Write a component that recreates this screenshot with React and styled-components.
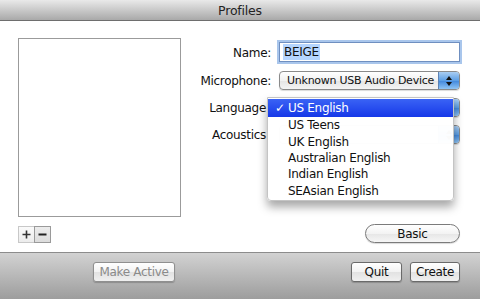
import React from 'react';
import styled, { createGlobalStyle } from 'styled-components';

const GlobalStyle = createGlobalStyle`
  html, body {
    margin: 0;
    padding: 0;
    background: #fff;
  }
  body {
    font-family: 'DejaVu Sans', 'Liberation Sans', sans-serif;
    font-size: 12px;
    color: #111;
  }
`;

const Window = styled.div`
  width: 480px;
  height: 299px;
  display: flex;
  flex-direction: column;
  overflow: hidden;
`;

const TitleBar = styled.div`
  height: 21px;
  flex-shrink: 0;
  display: flex;
  align-items: center;
  justify-content: center;
  background: linear-gradient(#e9e9e9, #c9c9c9 50%, #a9a9a9);
  border-bottom: 1px solid #6e6e6e;
  box-sizing: border-box;
  font-size: 12.5px;
  color: #222;
  letter-spacing: -0.2px;
`;

const Content = styled.div`
  flex: 1;
  display: flex;
  padding: 17px 20px 9px 18px;
  background: #fff;
`;

const LeftColumn = styled.div`
  width: 163px;
  display: flex;
  flex-direction: column;
  justify-content: space-between;
`;

const ListBox = styled.div`
  height: 179px;
  box-sizing: border-box;
  border: 1px solid #9b9b9b;
  background: #fff;
`;

const SegmentRow = styled.div`
  display: flex;
`;

const Segment = styled.div`
  width: 17px;
  height: 17px;
  box-sizing: border-box;
  display: flex;
  align-items: center;
  justify-content: center;
  border: 1px solid ${p => (p.$pressed ? '#9a9a9a' : '#c8c8c8')};
  background: ${p => (p.$pressed ? 'linear-gradient(#ececec, #dcdcdc)' : 'linear-gradient(#fafafa, #ececec)')};
  & + & {
    margin-left: -1px;
  }
`;

const RightColumn = styled.div`
  flex: 1;
  display: flex;
  flex-direction: column;
  justify-content: space-between;
  align-items: flex-end;
  padding-top: 4px;
`;

const Form = styled.div`
  position: relative;
  display: grid;
  grid-template-columns: 90px 181px;
  column-gap: 8px;
  row-gap: 8px;
  align-items: center;
`;

const Label = styled.div`
  text-align: right;
  letter-spacing: -0.3px;
  white-space: nowrap;
  padding-right: ${p => p.$pad || 0}px;
`;

const TextField = styled.div`
  height: 20px;
  box-sizing: border-box;
  border: 1px solid #6f8fc0;
  box-shadow: 0 0 0 2px #a9c6ec;
  background: #fff;
  display: flex;
  align-items: center;
  padding-left: 3px;
  margin-bottom: 1px;
`;

const Selected = styled.span`
  background: #b5d5ff;
  padding: 1px 1px;
  letter-spacing: -0.3px;
`;

const Popup = styled.div`
  height: 19px;
  box-sizing: border-box;
  border: 1px solid #8a8a8a;
  border-radius: 4px;
  background: linear-gradient(#ffffff, #f1f1f1 50%, #e4e4e4 51%, #f4f4f4);
  display: flex;
  align-items: center;
  overflow: hidden;
  box-shadow: 0 1px 1px rgba(0, 0, 0, 0.15);
`;

const PopupText = styled.div`
  flex: 1;
  min-width: 0;
  padding-left: 7px;
  font-size: 11px;
  letter-spacing: -0.25px;
  white-space: nowrap;
`;

const PopupArrows = styled.div`
  width: 20px;
  flex-shrink: 0;
  height: 100%;
  display: flex;
  align-items: center;
  justify-content: center;
  background: linear-gradient(#a9cdf2, #5d9fe4 50%, #3f86dc 51%, #8fc4f4);
  border-left: 1px solid #5c82b5;
`;

const Menu = styled.div`
  position: absolute;
  left: 86px;
  top: 55px;
  width: 187px;
  height: 104px;
  box-sizing: border-box;
  padding-top: 1px;
  background: rgba(255, 255, 255, 0.98);
  border: 1px solid #c4c4c4;
  border-radius: 0 0 4px 4px;
  box-shadow: 0 6px 10px rgba(0, 0, 0, 0.35);
`;

const MenuItem = styled.div`
  display: flex;
  align-items: center;
  padding-left: 20px;
  position: relative;
  letter-spacing: -0.3px;
  background: ${p => (p.$active ? 'linear-gradient(#3a63f5, #1638e8)' : 'transparent')};
  color: ${p => (p.$active ? '#fff' : '#111')};
  height: ${p => (p.$active ? '18px' : '16.4px')};
`;

const Check = styled.span`
  position: absolute;
  left: 7px;
`;

const PillButton = styled.div`
  width: 95px;
  height: 19px;
  box-sizing: border-box;
  border: 1px solid #7b7b7b;
  border-radius: 10px;
  background: linear-gradient(#ffffff, #f3f3f3 50%, #e6e6e6 51%, #f6f6f6);
  display: flex;
  align-items: center;
  justify-content: center;
  letter-spacing: -0.3px;
  box-shadow: 0 1px 1px rgba(0, 0, 0, 0.15);
`;

const BottomBar = styled.div`
  height: 47px;
  flex-shrink: 0;
  box-sizing: border-box;
  border-top: 1px solid #8c8c8c;
  background: linear-gradient(#d2d2d2, #bdbdbd 40%, #9d9d9d);
  display: flex;
  align-items: flex-start;
  padding: 9px 20px 0 93px;
`;

const PushButton = styled.div`
  width: ${p => p.$w}px;
  height: 20px;
  box-sizing: border-box;
  border: 1px solid ${p => (p.$disabled ? '#8f8f8f' : '#6a6a6a')};
  border-radius: 3px;
  background: linear-gradient(#ffffff, #f2f2f2 50%, #e2e2e2 51%, #f0f0f0);
  display: flex;
  align-items: center;
  justify-content: center;
  letter-spacing: -0.3px;
  color: ${p => (p.$disabled ? '#8a8a8a' : '#111')};
  box-shadow: 0 1px 1px rgba(0, 0, 0, 0.2);
  margin-left: ${p => p.$ml || 0}px;
`;

const Spacer = styled.div`
  flex: 1;
`;

const Arrows = () => (
  <svg width="8" height="12" viewBox="0 0 8 12">
    <path d="M4 1 L7 5 H1 Z" fill="#111" />
    <path d="M4 11 L7 7 H1 Z" fill="#111" />
  </svg>
);

const Plus = () => (
  <svg width="9" height="9" viewBox="0 0 9 9">
    <path d="M4.5 0.5 V8.5 M0.5 4.5 H8.5" stroke="#333" strokeWidth="1.6" />
  </svg>
);

const Minus = () => (
  <svg width="9" height="9" viewBox="0 0 9 9">
    <path d="M0.5 4.5 H8.5" stroke="#222" strokeWidth="2" />
  </svg>
);

const languages = ['US English', 'US Teens', 'UK English', 'Australian English', 'Indian English', 'SEAsian English'];

const App = () => {
  return (
    <Window>
      <GlobalStyle />
      <TitleBar>Profiles</TitleBar>
      <Content>
        <LeftColumn>
          <ListBox />
          <SegmentRow>
            <Segment><Plus /></Segment>
            <Segment $pressed><Minus /></Segment>
          </SegmentRow>
        </LeftColumn>
        <RightColumn>
          <Form>
            <Label>Name:</Label>
            <TextField>
              <Selected>BEIGE</Selected>
            </TextField>
            <Label>Microphone:</Label>
            <Popup>
              <PopupText>Unknown USB Audio Device</PopupText>
              <PopupArrows><Arrows /></PopupArrows>
            </Popup>
            <Label $pad={5}>Language</Label>
            <Popup>
              <PopupText />
              <PopupArrows><Arrows /></PopupArrows>
            </Popup>
            <Label $pad={5}>Acoustics</Label>
            <Popup>
              <PopupText />
              <PopupArrows><Arrows /></PopupArrows>
            </Popup>
            <Menu>
              {languages.map((l, i) => (
                <MenuItem key={l} $active={i === 0}>
                  {i === 0 && <Check>✓</Check>}
                  {l}
                </MenuItem>
              ))}
            </Menu>
          </Form>
          <PillButton>Basic</PillButton>
        </RightColumn>
      </Content>
      <BottomBar>
        <PushButton $w={82} $disabled>Make Active</PushButton>
        <Spacer />
        <PushButton $w={51}>Quit</PushButton>
        <PushButton $w={50} $ml={8}>Create</PushButton>
      </BottomBar>
    </Window>
  );
};

export default App;
